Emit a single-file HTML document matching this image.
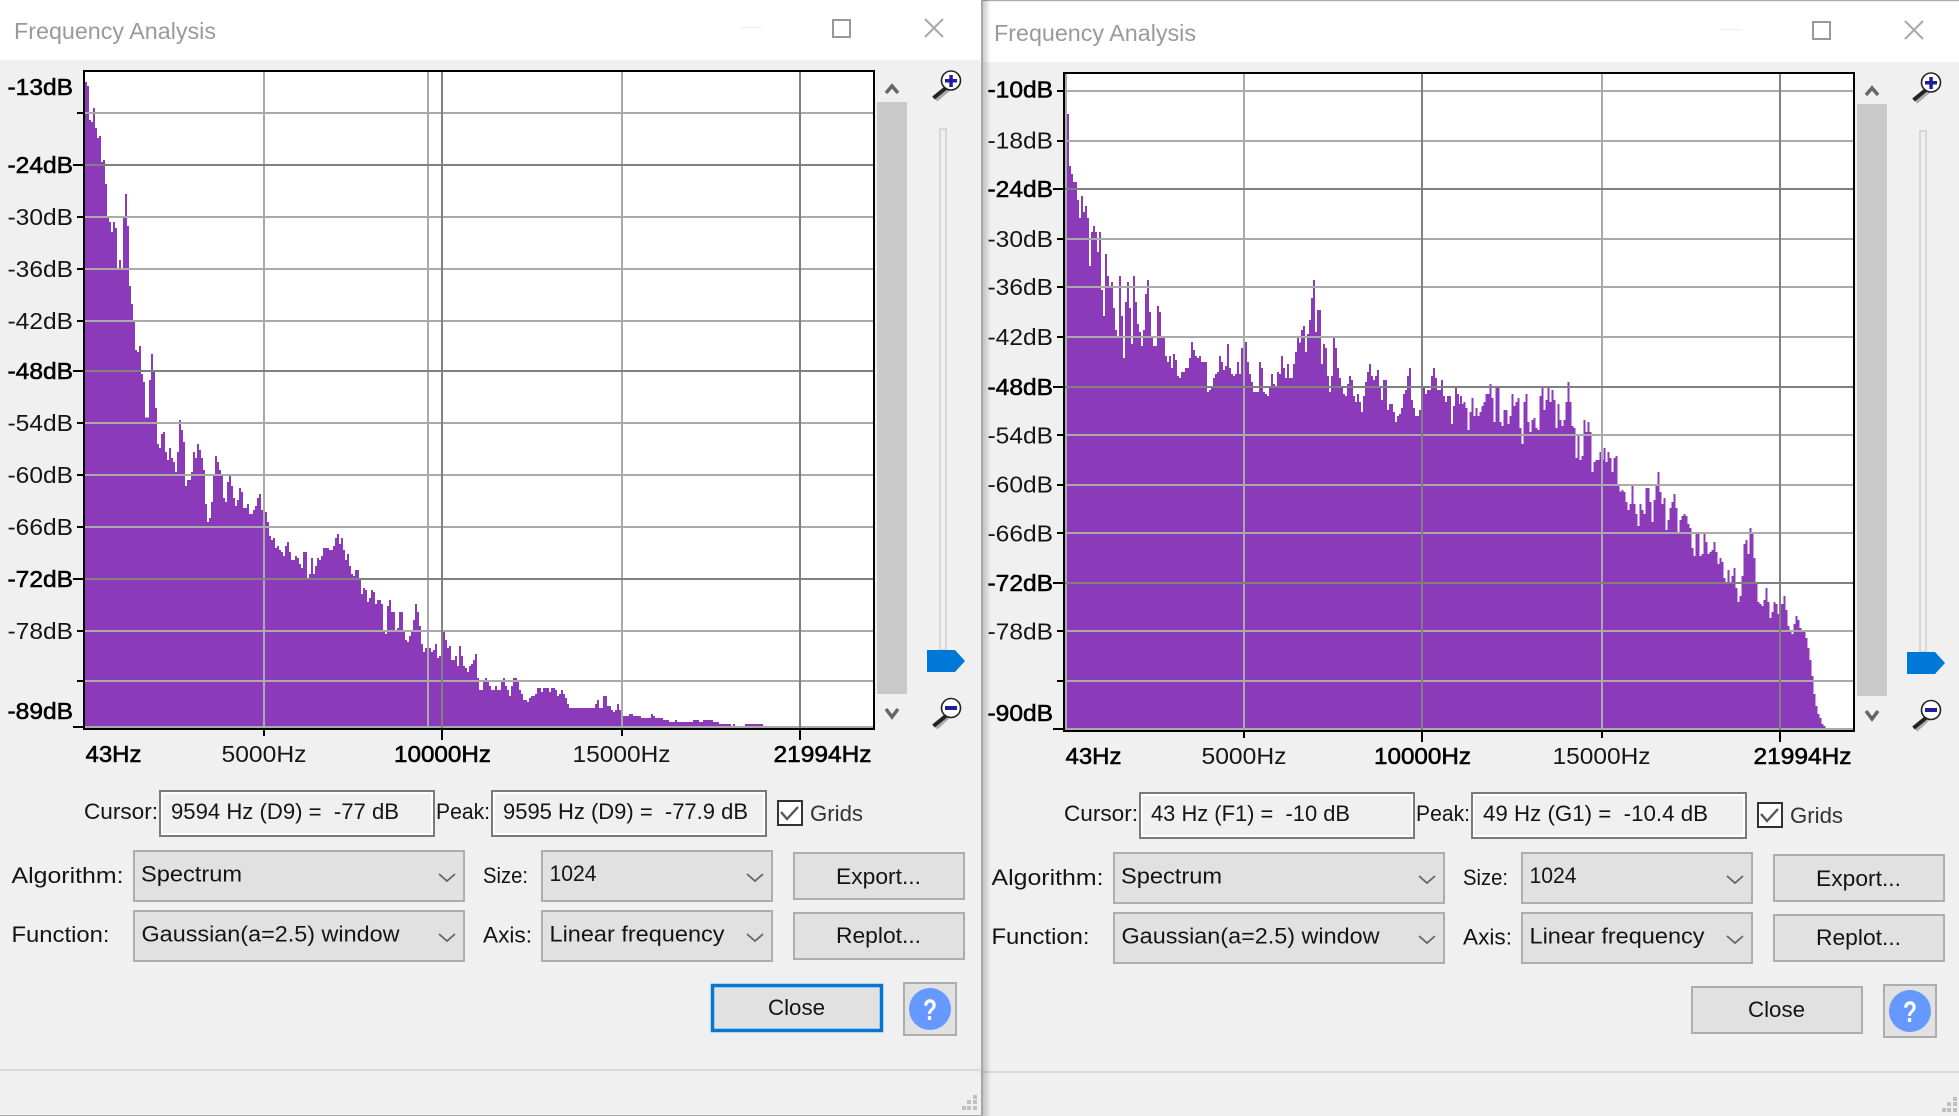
<!DOCTYPE html>
<html>
<head>
<meta charset="utf-8">
<title>Frequency Analysis</title>
<style>
html,body{margin:0;padding:0;background:#f0f0f0;width:1959px;height:1116px;overflow:hidden}
svg{display:block;position:absolute;left:0;top:0}
text{font-family:"Liberation Sans",Arial,sans-serif;white-space:pre}
.t{font-size:22.5px;fill:#141414}
.h{font-size:23px;fill:#9a9a9a}
.r{font-size:23px;fill:#161616}
.b{font-size:23px;fill:#000;stroke:#000;stroke-width:.55px}
.g{font-size:22.5px;fill:#333}
.p{fill:#8b3aba}
</style>
</head>
<body>
<svg width="1959" height="1116" viewBox="0 0 1959 1116" xmlns="http://www.w3.org/2000/svg">
<defs>
<linearGradient id="sh" x1="0" x2="1" y1="0" y2="0"><stop offset="0" stop-color="#000" stop-opacity=".2"/><stop offset="1" stop-color="#000" stop-opacity="0"/></linearGradient>
<g id="base">
  <rect x="0" y="0" width="981" height="60" fill="#fff"/>
  <rect x="0" y="60" width="981" height="1056" fill="#f0f0f0"/>
  <rect x="0" y="1069" width="981" height="2" fill="#d9d9d9"/>
  <rect x="740" y="27" width="22" height="1" fill="#f0f0f0"/>
  <rect x="833" y="20" width="17" height="17" fill="none" stroke="#999" stroke-width="2"/>
  <path d="M925 19L943 37M943 19L925 37" fill="none" stroke="#a8a8a8" stroke-width="2"/>
  <rect x="85" y="72" width="788" height="656" fill="#fff"/>
</g>
<g id="over">
  <g fill="#000">
    <rect x="83" y="70" width="792" height="2"/><rect x="83" y="70" width="2" height="660"/>
    <rect x="873" y="70" width="2" height="660"/><rect x="83" y="728" width="792" height="2"/>
    <rect x="263" y="730" width="2" height="6"/><rect x="441" y="730" width="2" height="10"/>
    <rect x="621" y="730" width="2" height="6"/><rect x="799" y="730" width="2" height="10"/>
  </g>
  <rect x="877" y="102" width="30" height="592" fill="#c9c9c9"/>
  <path d="M886 93L892 86L898 93M886 709L892 717L898 709" fill="none" stroke="#666" stroke-width="3.5"/>
  <rect x="940" y="129" width="6" height="521" fill="#f0f0f0" stroke="#d8d8d8" stroke-width="2"/>
  <path d="M927 650H955L965 661L955 672H927Z" fill="#0078d7"/>
  <path d="M948 88L935 99" stroke="#aaa" stroke-width="4" transform="translate(1 1)"/>
  <path d="M947 87L933.5 98" stroke="#222" stroke-width="4"/>
  <circle cx="951" cy="80.5" r="9.5" fill="#fff" stroke="#222" stroke-width="1.6"/>
  <path d="M945 79H957V82.5H945ZM949.3 75H952.8V87H949.3Z" fill="#1e1e9e"/>
  <path d="M948 715L935 727" stroke="#aaa" stroke-width="4" transform="translate(1 1)"/>
  <path d="M947 715L933.5 726" stroke="#222" stroke-width="4"/>
  <circle cx="951" cy="708" r="9.5" fill="#fff" stroke="#222" stroke-width="1.6"/>
  <rect x="945" y="706" width="12" height="4" fill="#1e1e9e"/>
  <g fill="#f0f0f0" stroke="#7a7a7a" stroke-width="2">
    <rect x="160" y="791" width="274" height="45"/><rect x="492" y="791" width="274" height="45"/>
  </g>
  <g fill="none" stroke="#fff" stroke-width="2">
    <rect x="162" y="793" width="270" height="41"/><rect x="494" y="793" width="270" height="41"/>
  </g>
  <rect x="778" y="801" width="24" height="24" fill="#fff" stroke="#333" stroke-width="2"/>
  <path d="M781 812L787 819L798 807" fill="none" stroke="#555" stroke-width="2.4"/>
  <g fill="#e1e1e1" stroke="#adadad" stroke-width="2">
    <rect x="134" y="851" width="330" height="50"/><rect x="134" y="911" width="330" height="50"/>
    <rect x="542" y="851" width="230" height="50"/><rect x="542" y="911" width="230" height="50"/>
    <rect x="794" y="853" width="170" height="46"/><rect x="794" y="913" width="170" height="46"/>
    <rect x="904" y="983" width="52" height="52"/>
  </g>
  <path d="M439 874L447 881L455 874M439 934L447 941L455 934M747 874L755 881L763 874M747 934L755 941L763 934" fill="none" stroke="#666" stroke-width="1.8"/>
  <circle cx="930" cy="1009" r="21" fill="#6699ff"/>
  <g fill="#c0c0c0">
    <rect x="973" y="1095" width="4" height="4"/><rect x="967" y="1100" width="4" height="4"/><rect x="973" y="1100" width="4" height="4"/>
    <rect x="962" y="1106" width="4" height="4"/><rect x="967" y="1106" width="4" height="4"/><rect x="973" y="1106" width="4" height="4"/>
  </g>
</g>
</defs>

<!-- LEFT DIALOG -->
<use href="#base"/>
<g transform="scale(.33333)" class="p" shape-rendering="crispEdges">
<path d="M255 2184V246H261V258H267V360H273V366H279V324H285V384H291V414H297V408H303V486H309V480H315V552H321V654H327V666H333V696H339V666H345V684H351V804H357V780H363V804H369V654H375V582H381V678H387V858H393V912H399V966H405V1050H411V1056H417V1038H423V1122H429V1146H435V1253H447V1140H453V1062H459V1116H465V2184Z"/>
<path transform="translate(0,1200)" d="M465 984V24H471V132H477V144H483V102H489V96H495V156H501V180H507V144H513V174H519V186H525V216H531V156H537V60H543V90H549V126H555V258H561V240H573V216H579V156H585V174H591V132H597V150H603V174H609V210H615V312H621V366H627V354H633V306H639V222H645V168H651V186H657V210H663V222H669V294H675V306H681V246H687V228H693V258H699V294H705V318H711V300H717V264H723V276H729V324H741V312H747V342H759V330H765V318H771V294H777V282H783V330H789V336H801V366H807V408H813V420H819V414H825V444H831V438H837V450H843V456H849V468H855V438H861V426H867V456H873V480H885V468H891V474H897V492H903V504H909V456H921V534H927V522H933V474H939V522H945V498H951V474H957V480H963V468H969V444H987V450H999V438H1005V414H1011V402H1017V432H1023V414H1029V450H1035V480H1041V462H1047V498H1053V522H1059V528H1065V510H1077V540H1083V582H1089V564H1095V570H1101V606H1107V594H1113V570H1119V576H1125V612H1131V600H1143V612H1149V696H1155V702H1161V618H1167V600H1173V636H1185V690H1191V684H1197V636H1209V690H1215V720H1221V726H1227V708H1233V696H1239V660H1245V612H1251V636H1257V678H1263V732H1269V756H1275V744H1281V756H1287V744H1293V756H1299V750H1305V732H1311V774H1317V768H1323V696H1335V720H1341V744H1347V738H1353V780H1365V768H1371V798H1377V738H1383V768H1389V798H1395V804H1401V816H1407V798H1413V792H1419V780H1425V762H1431V834H1437V870H1440V984Z"/>
<path transform="translate(1440,1200)" d="M0 984V870H9V846H15V834H21V846H27V858H33V870H45V858H51V870H63V846H69V834H75V858H81V870H87V888H93V858H99V834H111V846H117V870H123V882H129V900H141V906H147V894H153V888H165V882H171V864H183V876H189V864H207V876H213V864H225V870H231V888H237V882H243V870H249V882H255V894H261V912H267V924H345V912H351V900H357V924H369V888H381V918H393V930H399V936H405V930H411V912H417V930H423V942H429V948H447V942H459V948H483V954H513V942H519V948H525V954H549V960H567V966H585V960H591V966H639V960H657V966H669V960H699V966H717V972H753V978H759V972H765V978H795V972H849V984Z"/>
</g>
<g shape-rendering="crispEdges">
  <g fill="#aaa">
    <rect x="85" y="112" width="788" height="2"/><rect x="85" y="216" width="788" height="2"/><rect x="85" y="268" width="788" height="2"/><rect x="85" y="320" width="788" height="2"/><rect x="85" y="422" width="788" height="2"/><rect x="85" y="474" width="788" height="2"/><rect x="85" y="526" width="788" height="2"/><rect x="85" y="630" width="788" height="2"/><rect x="85" y="680" width="788" height="2"/><rect x="85" y="726" width="788" height="2"/>
    <rect x="263" y="72" width="2" height="656"/><rect x="427" y="72" width="2" height="656"/><rect x="621" y="72" width="2" height="656"/>
  </g>
  <g fill="#808080">
    <rect x="85" y="164" width="788" height="2"/><rect x="85" y="370" width="788" height="2"/><rect x="85" y="578" width="788" height="2"/>
    <rect x="441" y="72" width="2" height="656"/><rect x="799" y="72" width="2" height="656"/>
  </g>
  <g fill="#000">
    <rect x="77" y="112" width="6" height="2"/><rect x="73" y="164" width="10" height="2"/><rect x="77" y="216" width="6" height="2"/><rect x="77" y="268" width="6" height="2"/><rect x="77" y="320" width="6" height="2"/><rect x="73" y="370" width="10" height="2"/><rect x="77" y="422" width="6" height="2"/><rect x="77" y="474" width="6" height="2"/><rect x="77" y="526" width="6" height="2"/><rect x="73" y="578" width="10" height="2"/><rect x="77" y="630" width="6" height="2"/><rect x="77" y="680" width="6" height="2"/><rect x="73" y="726" width="10" height="2"/>
  </g>
</g>
<use href="#over"/>
<rect x="712.5" y="985.5" width="169" height="45" fill="#e1e1e1" stroke="#0078d7" stroke-width="3.5"/>
<text class="h" x="14" y="39" textLength="202" lengthAdjust="spacingAndGlyphs">Frequency Analysis</text>
<text class="b" x="7.5" y="95" textLength="65.5" lengthAdjust="spacingAndGlyphs">-13dB</text>
<text class="b" x="7.5" y="173" textLength="65.5" lengthAdjust="spacingAndGlyphs">-24dB</text>
<text class="r" x="7.5" y="225" textLength="65.5" lengthAdjust="spacingAndGlyphs">-30dB</text>
<text class="r" x="7.5" y="277" textLength="65.5" lengthAdjust="spacingAndGlyphs">-36dB</text>
<text class="r" x="7.5" y="329" textLength="65.5" lengthAdjust="spacingAndGlyphs">-42dB</text>
<text class="b" x="7.5" y="379" textLength="65.5" lengthAdjust="spacingAndGlyphs">-48dB</text>
<text class="r" x="7.5" y="431" textLength="65.5" lengthAdjust="spacingAndGlyphs">-54dB</text>
<text class="r" x="7.5" y="483" textLength="65.5" lengthAdjust="spacingAndGlyphs">-60dB</text>
<text class="r" x="7.5" y="535" textLength="65.5" lengthAdjust="spacingAndGlyphs">-66dB</text>
<text class="b" x="7.5" y="587" textLength="65.5" lengthAdjust="spacingAndGlyphs">-72dB</text>
<text class="r" x="7.5" y="639" textLength="65.5" lengthAdjust="spacingAndGlyphs">-78dB</text>
<text class="b" x="7.5" y="719" textLength="65.5" lengthAdjust="spacingAndGlyphs">-89dB</text>
<text class="b" x="85.5" y="762" textLength="56" lengthAdjust="spacingAndGlyphs">43Hz</text>
<text class="r" x="221.5" y="762" textLength="85" lengthAdjust="spacingAndGlyphs">5000Hz</text>
<text class="b" x="394" y="762" textLength="97" lengthAdjust="spacingAndGlyphs">10000Hz</text>
<text class="r" x="572.5" y="762" textLength="98" lengthAdjust="spacingAndGlyphs">15000Hz</text>
<text class="b" x="773.5" y="762" textLength="98" lengthAdjust="spacingAndGlyphs">21994Hz</text>
<text class="t" x="84" y="819" textLength="74" lengthAdjust="spacingAndGlyphs">Cursor:</text>
<text class="t" x="171" y="819" textLength="228" lengthAdjust="spacingAndGlyphs">9594 Hz (D9) =  -77 dB</text>
<text class="t" x="436" y="819" textLength="54" lengthAdjust="spacingAndGlyphs">Peak:</text>
<text class="t" x="503" y="819" textLength="245" lengthAdjust="spacingAndGlyphs">9595 Hz (D9) =  -77.9 dB</text>
<text class="g" x="810" y="821" textLength="53" lengthAdjust="spacingAndGlyphs">Grids</text>
<text class="t" x="11.5" y="883" textLength="112" lengthAdjust="spacingAndGlyphs">Algorithm:</text>
<text class="t" x="11.5" y="942" textLength="98" lengthAdjust="spacingAndGlyphs">Function:</text>
<text class="t" x="141" y="881.5" textLength="101" lengthAdjust="spacingAndGlyphs">Spectrum</text>
<text class="t" x="141.5" y="941.5" textLength="258" lengthAdjust="spacingAndGlyphs">Gaussian(a=2.5) window</text>
<text class="t" x="483" y="883" textLength="45" lengthAdjust="spacingAndGlyphs">Size:</text>
<text class="t" x="483" y="942.5" textLength="49" lengthAdjust="spacingAndGlyphs">Axis:</text>
<text class="t" x="549.5" y="881" textLength="47" lengthAdjust="spacingAndGlyphs">1024</text>
<text class="t" x="549.5" y="941.5" textLength="175" lengthAdjust="spacingAndGlyphs">Linear frequency</text>
<text class="t" x="836" y="884" textLength="85" lengthAdjust="spacingAndGlyphs">Export...</text>
<text class="t" x="836" y="943" textLength="85" lengthAdjust="spacingAndGlyphs">Replot...</text>
<text class="t" x="768" y="1015" textLength="57" lengthAdjust="spacingAndGlyphs">Close</text>
<text x="923" y="1020" font-size="30" font-weight="700" fill="#fff" textLength="14" lengthAdjust="spacingAndGlyphs">?</text>

<!-- RIGHT DIALOG -->
<g transform="translate(980,2)">
<use href="#base"/>
</g>
<rect x="982" y="0" width="977" height="1" fill="#aaa"/>
<g transform="translate(980,0) scale(.33333)" class="p" shape-rendering="crispEdges">
<path d="M261 2190V342H267V498H273V522H279V546H291V600H297V654H303V588H309V636H315V618H321V654H327V798H333V696H339V678H345V696H351V756H357V696H363V870H369V948H375V762H381V828H387V858H393V846H399V924H405V990H411V1008H417V828H423V948H429V1074H435V906H441V846H447V924H453V1032H459V828H465V906H471V972H477V996H483V1038H489V990H495V882H501V840H507V936H513V1014H519V1038H531V918H537V936H543V1014H555V1068H561V1086H567V1068H573V1104H579V1062H585V1080H591V1128H597V1134H603V1116H615V1104H621V1104H627V1074H633V1026H639V1050H645V1068H651V1074H657V1068H663V1086H681V1176H687V1170H693V1158H699V1134H705V1122H711V1116H717V1068H723V1086H729V1110H735V1098H741V1032H747V1104H753V1122H759V1128H765V1122H771V1086H777V1122H783V1044H795V1026H801V1086H807V1122H813V1146H819V1176H837V1086H843V1104H849V1176H855V1182H861V1188H867V1158H873V1122H879V1152H885V1158H891V1116H897V1122H903V1068H909V1104H915V1134H921V1092H927V1134H939V1092H945V1056H951V1014H957V1028H963V990H969V978H975V1056H981V1002H987V960H993V894H999V840H1005V996H1011V930H1023V1092H1029V1032H1035V1044H1041V1128H1047V1176H1053V1128H1059V1014H1065V1044H1071V1104H1077V1134H1083V1164H1089V1182H1095V1188H1101V1152H1107V1128H1113V1140H1119V1188H1125V1206H1131V1182H1137V1206H1143V1236H1149V1188H1155V1146H1161V1116H1167V1092H1173V1128H1179V1140H1185V1128H1191V1110H1197V1158H1203V1200H1209V1140H1221V1230H1227V1212H1239V1236H1245V1266H1251V1248H1257V1242H1263V1224H1269V1182H1275V1170H1281V1128H1287V1104H1293V1200H1299V1224H1305V1248H1317V1230H1323V1212H1329V1162H1335V1182H1341V1170H1353V1128H1359V1104H1365V1134H1371V1170H1383V1140H1389V1188H1395V1206H1401V1188H1413V1272H1419V1218H1425V1164H1431V1182H1437V1212H1440V2190Z"/>
<path transform="translate(1440,900)" d="M0 1290V288H6V312H10V306H16V324H22V390H28V336H34V294H40V348H46V324H52V348H58V336H64V318H70V306H76V282H88V252H94V294H100V366H106V264H118V366H124V378H130V330H142V372H148V348H154V282H160V318H166V306H172V294H178V384H184V432H190V306H196V282H202V366H208V396H214V360H220V354H226V384H232V390H238V288H244V264H250V330H256V300H262V264H268V306H274V270H280V300H286V384H292V312H298V360H304V378H310V360H316V306H322V246H328V306H334V378H340V384H346V474H352V408H358V480H364V468H370V360H376V396H382V366H388V396H394V516H400V486H406V480H418V456H424V480H430V444H436V486H442V456H448V474H454V516H460V474H466V468H472V558H478V574H484V570H490V576H496V606H502V630H508V612H514V558H520V612H526V642H532V678H538V612H544V630H550V642H556V564H568V606H574V666H580V600H586V558H592V516H598V576H604V612H610V594H616V690H622V660H628V624H634V606H640V582H646V624H652V696H658V660H664V648H670V642H676V648H682V672H688V684H694V744H700V768H706V702H718V768H724V762H730V702H736V726H742V762H748V756H754V750H760V726H766V756H772V792H778V774H784V786H790V834H796V846H802V810H808V846H814V828H820V804H826V864H832V906H838V888H844V828H850V732H856V720H862V762H868V684H874V702H880V774H886V852H892V906H898V912H904V918H910V900H916V864H922V906H928V954H934V936H940V906H946V912H952V942H958V912H970V888H976V930H982V978H988V990H994V1002H1000V972H1006V948H1012V960H1018V984H1024V990H1030V996H1036V1014H1042V1044H1048V1080H1054V1128H1060V1182H1066V1218H1072V1242H1078V1254H1084V1272H1090V1278H1096V1290Z"/>
</g>
<g transform="translate(980,2)">
<g shape-rendering="crispEdges">
  <g fill="#aaa">
    <rect x="85" y="88" width="788" height="2"/><rect x="85" y="138" width="788" height="2"/><rect x="85" y="236" width="788" height="2"/><rect x="85" y="284" width="788" height="2"/><rect x="85" y="334" width="788" height="2"/><rect x="85" y="432" width="788" height="2"/><rect x="85" y="482" width="788" height="2"/><rect x="85" y="530" width="788" height="2"/><rect x="85" y="628" width="788" height="2"/><rect x="85" y="678" width="788" height="2"/><rect x="85" y="726" width="788" height="2"/>
    <rect x="85" y="72" width="2" height="656"/><rect x="263" y="72" width="2" height="656"/><rect x="621" y="72" width="2" height="656"/>
  </g>
  <g fill="#808080">
    <rect x="85" y="186" width="788" height="2"/><rect x="85" y="384" width="788" height="2"/><rect x="85" y="580" width="788" height="2"/>
    <rect x="441" y="72" width="2" height="656"/><rect x="799" y="72" width="2" height="656"/>
  </g>
  <g fill="#000">
    <rect x="77" y="88" width="6" height="2"/><rect x="77" y="138" width="6" height="2"/><rect x="73" y="186" width="10" height="2"/><rect x="77" y="236" width="6" height="2"/><rect x="77" y="284" width="6" height="2"/><rect x="77" y="334" width="6" height="2"/><rect x="73" y="384" width="10" height="2"/><rect x="77" y="432" width="6" height="2"/><rect x="77" y="482" width="6" height="2"/><rect x="77" y="530" width="6" height="2"/><rect x="73" y="580" width="10" height="2"/><rect x="77" y="628" width="6" height="2"/><rect x="77" y="678" width="6" height="2"/><rect x="73" y="726" width="10" height="2"/>
  </g>
</g>
<use href="#over"/>
<rect x="712" y="985" width="170" height="46" fill="#e1e1e1" stroke="#adadad" stroke-width="2"/>
<text class="h" x="14" y="39" textLength="202" lengthAdjust="spacingAndGlyphs">Frequency Analysis</text>
<text class="b" x="7.5" y="95.5" textLength="65.5" lengthAdjust="spacingAndGlyphs">-10dB</text>
<text class="r" x="7.5" y="146.5" textLength="65.5" lengthAdjust="spacingAndGlyphs">-18dB</text>
<text class="b" x="7.5" y="195" textLength="65.5" lengthAdjust="spacingAndGlyphs">-24dB</text>
<text class="r" x="7.5" y="245" textLength="65.5" lengthAdjust="spacingAndGlyphs">-30dB</text>
<text class="r" x="7.5" y="293" textLength="65.5" lengthAdjust="spacingAndGlyphs">-36dB</text>
<text class="r" x="7.5" y="343" textLength="65.5" lengthAdjust="spacingAndGlyphs">-42dB</text>
<text class="b" x="7.5" y="393" textLength="65.5" lengthAdjust="spacingAndGlyphs">-48dB</text>
<text class="r" x="7.5" y="441.5" textLength="65.5" lengthAdjust="spacingAndGlyphs">-54dB</text>
<text class="r" x="7.5" y="490.5" textLength="65.5" lengthAdjust="spacingAndGlyphs">-60dB</text>
<text class="r" x="7.5" y="539.5" textLength="65.5" lengthAdjust="spacingAndGlyphs">-66dB</text>
<text class="b" x="7.5" y="589" textLength="65.5" lengthAdjust="spacingAndGlyphs">-72dB</text>
<text class="r" x="7.5" y="637.5" textLength="65.5" lengthAdjust="spacingAndGlyphs">-78dB</text>
<text class="b" x="7.5" y="719" textLength="65.5" lengthAdjust="spacingAndGlyphs">-90dB</text>
<text class="b" x="85.5" y="762" textLength="56" lengthAdjust="spacingAndGlyphs">43Hz</text>
<text class="r" x="221.5" y="762" textLength="85" lengthAdjust="spacingAndGlyphs">5000Hz</text>
<text class="b" x="394" y="762" textLength="97" lengthAdjust="spacingAndGlyphs">10000Hz</text>
<text class="r" x="572.5" y="762" textLength="98" lengthAdjust="spacingAndGlyphs">15000Hz</text>
<text class="b" x="773.5" y="762" textLength="98" lengthAdjust="spacingAndGlyphs">21994Hz</text>
<text class="t" x="84" y="819" textLength="74" lengthAdjust="spacingAndGlyphs">Cursor:</text>
<text class="t" x="171" y="819" textLength="199" lengthAdjust="spacingAndGlyphs">43 Hz (F1) =  -10 dB</text>
<text class="t" x="436" y="819" textLength="54" lengthAdjust="spacingAndGlyphs">Peak:</text>
<text class="t" x="503" y="819" textLength="225" lengthAdjust="spacingAndGlyphs">49 Hz (G1) =  -10.4 dB</text>
<text class="g" x="810" y="821" textLength="53" lengthAdjust="spacingAndGlyphs">Grids</text>
<text class="t" x="11.5" y="883" textLength="112" lengthAdjust="spacingAndGlyphs">Algorithm:</text>
<text class="t" x="11.5" y="942" textLength="98" lengthAdjust="spacingAndGlyphs">Function:</text>
<text class="t" x="141" y="881.5" textLength="101" lengthAdjust="spacingAndGlyphs">Spectrum</text>
<text class="t" x="141.5" y="941.5" textLength="258" lengthAdjust="spacingAndGlyphs">Gaussian(a=2.5) window</text>
<text class="t" x="483" y="883" textLength="45" lengthAdjust="spacingAndGlyphs">Size:</text>
<text class="t" x="483" y="942.5" textLength="49" lengthAdjust="spacingAndGlyphs">Axis:</text>
<text class="t" x="549.5" y="881" textLength="47" lengthAdjust="spacingAndGlyphs">1024</text>
<text class="t" x="549.5" y="941.5" textLength="175" lengthAdjust="spacingAndGlyphs">Linear frequency</text>
<text class="t" x="836" y="884" textLength="85" lengthAdjust="spacingAndGlyphs">Export...</text>
<text class="t" x="836" y="943" textLength="85" lengthAdjust="spacingAndGlyphs">Replot...</text>
<text class="t" x="768" y="1015" textLength="57" lengthAdjust="spacingAndGlyphs">Close</text>
<text x="923" y="1020" font-size="30" font-weight="700" fill="#fff" textLength="14" lengthAdjust="spacingAndGlyphs">?</text>
</g>

<!-- window edge + shadow -->
<rect x="0" y="1115" width="982" height="1" fill="#aaa"/>
<rect x="983" y="0" width="8" height="1116" fill="url(#sh)"/>
<rect x="981" y="0" width="2" height="1116" fill="#a8a8a8"/>
</svg>
</body>
</html>
